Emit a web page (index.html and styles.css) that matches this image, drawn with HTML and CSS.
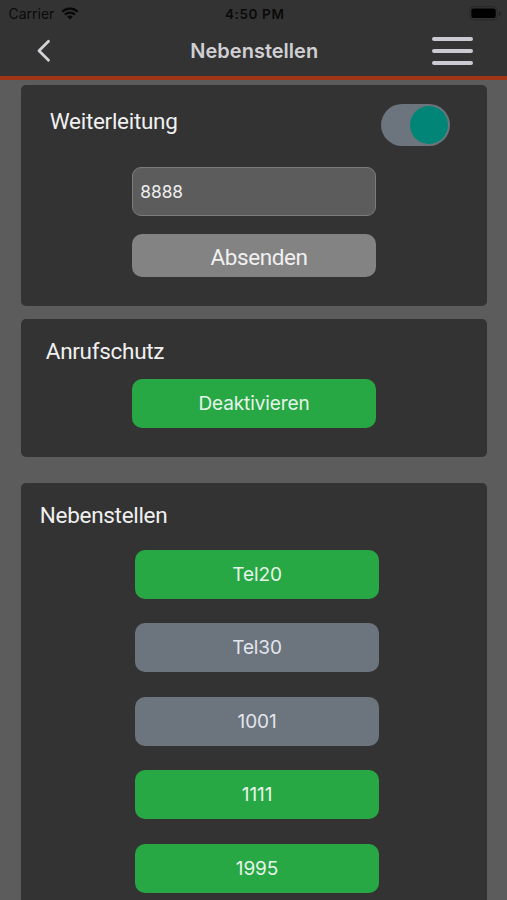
FILE: index.html
```html
<!DOCTYPE html>
<html lang="de">
<head>
<meta charset="utf-8">
<title>Nebenstellen</title>
<link rel="stylesheet" href="styles.css">
</head>
<body>
<header class="top">
  <div class="status">
    <div class="carrier"><span class="carrier-name">Carrier</span>
      <svg class="wifi" width="18" height="13" viewBox="0 0 18 13" fill="none" stroke="#080808" stroke-width="2.3"><path d="M1.3 4.8C5.6.6 12.4.6 16.7 4.8M4 7.7C6.8 5 11.2 5 14 7.7"/><path d="M9 12.4 6.1 9.5C7.6 8 10.4 8 11.9 9.5Z" fill="#080808" stroke="none"/></svg>
    </div>
    <span class="time">4:50 PM</span>
    <svg class="battery" width="32" height="15" viewBox="0 0 32 15"><rect x=".7" y=".7" width="27.6" height="13.2" rx="4" fill="none" stroke="#282828" stroke-width="1"/><rect x="2.3" y="2.6" width="24.4" height="9.4" rx="2" fill="#000"/><path d="M30 5v5c2-1 2-4 0-5z" fill="#202020"/></svg>
  </div>
  <nav class="nav">
    <svg class="back" width="16" height="24" viewBox="0 0 16 24" fill="none" stroke="#d2d2d6" stroke-width="2.8" stroke-linecap="round" stroke-linejoin="round"><path d="M12.5 2.2 3 11.7l9.5 9.6"/></svg>
    <h1 class="title">Nebenstellen</h1>
    <div class="menu"><i class="bar"></i><i class="bar"></i><i class="bar"></i></div>
  </nav>
</header>
<main class="page">
  <section class="card forward">
    <div class="row"><h2 class="heading">Weiterleitung</h2><div class="toggle"><div class="knob"></div></div></div>
    <div class="field"><span class="value">8888</span></div>
    <button class="btn send"><span class="send-label">Absenden</span></button>
  </section>
  <section class="card protect">
    <h2 class="heading">Anrufschutz</h2>
    <button class="btn on">Deaktivieren</button>
  </section>
  <section class="card extensions">
    <h2 class="heading">Nebenstellen</h2>
    <div class="list">
      <button class="btn on">Tel20</button>
      <button class="btn off">Tel30</button>
      <button class="btn off">1001</button>
      <button class="btn on">1111</button>
      <button class="btn on">1995</button>
    </div>
  </section>
</main>
</body>
</html>
```
FILE: styles.css
```css
* { box-sizing: border-box; }
body { margin: 0; height: 900px; overflow: hidden; background: #5c5c5c; font-family: Inter, "Liberation Sans", sans-serif; }
.top { height: 79.5px; background: #333; border-bottom: 4px solid #a03614; }
.status { height: 27px; display: grid; grid-template-columns: 1fr auto 1fr; align-items: center; padding: 0 6px 0 8.5px; color: #0a0a0a; }
.carrier { display: flex; align-items: center; gap: 7px; font-size: 14px; }
.time { font-size: 13.5px; font-weight: 600; letter-spacing: .6px; }
.battery { justify-self: end; }
.nav { height: 48px; display: grid; grid-template-columns: 1fr auto 1fr; align-items: center; padding: 0 34.5px 0 36px; }
.title { margin: 0; font-size: 20px; font-weight: 600; color: #d0d0d4; }
.menu { justify-self: end; width: 41px; display: grid; gap: 8.2px; }
.bar { height: 4px; border-radius: 2px; background: #cbcad2; }
.page { padding: 5.5px 20.5px 0 21.3px; }
.card { background: #333; border-radius: 5px; }
.heading { margin: 0; font: 400 22.5px/28px Roboto, sans-serif; letter-spacing: -.3px; color: #f0f0f0; }
.forward { height: 221px; padding: 18.5px 36.8px 0 28.5px; }
.row { display: flex; justify-content: space-between; }
.forward .heading { padding-top: 3.5px; }
.toggle { width: 69px; height: 42px; border-radius: 21px; background: #6c757d; display: flex; align-items: center; justify-content: flex-end; padding-right: 2px; }
.knob { width: 38px; height: 38px; border-radius: 50%; background: #018576; }
.field { width: 244.5px; height: 49px; margin: 21.5px 0 0 82px; border: 1px solid #7c7c7c; border-radius: 9px; background: #5c5c5c; display: flex; align-items: center; padding-left: 7.5px; color: #eee; font-size: 17.3px; }
.value { margin-top: -1px; }
.btn { display: block; width: 244.5px; height: 49px; padding: 0; border: 0; border-radius: 10px; font: 400 19px/49px Inter, sans-serif; letter-spacing: -.1px; text-align: center; color: #e6f5e9; }
.send { height: 43px; margin: 18px 0 0 82px; background: #838383; font: 400 22.5px/47px Roboto, sans-serif; letter-spacing: -.4px; color: #f0f0f0; padding-left: 10px; }
.protect { height: 138.5px; margin-top: 12.5px; padding: 18px 0 0 24.5px; }
.protect .btn { margin: 14.3px 0 0 86px; }
.on { background: #28a745; }
.off { background: #6c757d; color: #e2e6ee; }
.extensions { height: 450px; margin-top: 26px; padding: 18px 0 0 18.5px; border-radius: 5px 5px 0 0; }
.list { display: grid; gap: 24.4px; margin: 21px 0 0 95px; }
```
